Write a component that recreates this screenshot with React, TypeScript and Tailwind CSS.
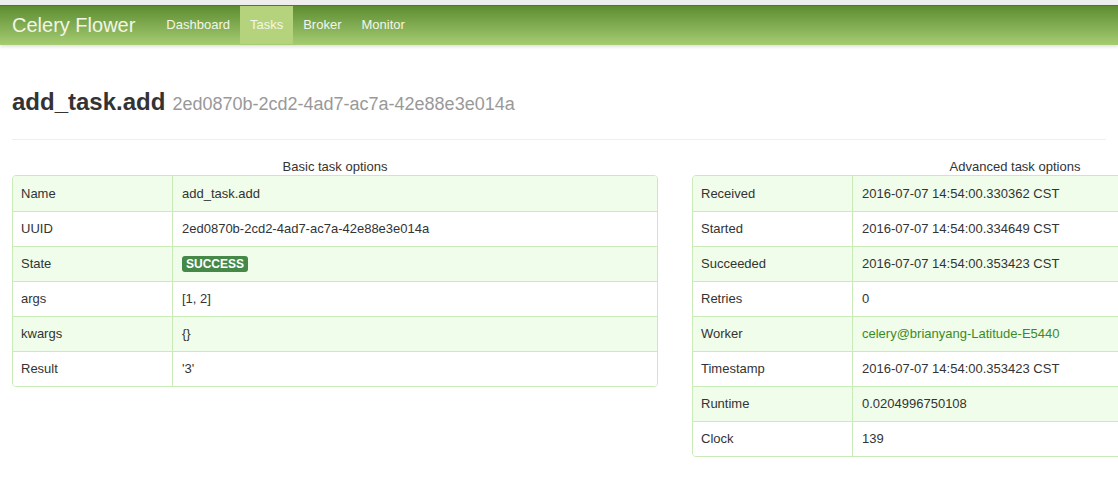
import React from 'react';

type Row = { label: string; value: React.ReactNode };

const basic: Row[] = [
  { label: 'Name', value: 'add_task.add' },
  { label: 'UUID', value: '2ed0870b-2cd2-4ad7-ac7a-42e88e3e014a' },
  {
    label: 'State',
    value: (
      <span className="inline-block rounded-[3px] bg-[#468847] px-[4px] py-[1px] text-[12px] font-bold leading-[14px] text-white">
        SUCCESS
      </span>
    ),
  },
  { label: 'args', value: '[1, 2]' },
  { label: 'kwargs', value: '{}' },
  { label: 'Result', value: "'3'" },
];

const advanced: Row[] = [
  { label: 'Received', value: '2016-07-07 14:54:00.330362 CST' },
  { label: 'Started', value: '2016-07-07 14:54:00.334649 CST' },
  { label: 'Succeeded', value: '2016-07-07 14:54:00.353423 CST' },
  { label: 'Retries', value: '0' },
  { label: 'Worker', value: <a className="text-[#3f8a1f]">celery@brianyang-Latitude-E5440</a> },
  { label: 'Timestamp', value: '2016-07-07 14:54:00.353423 CST' },
  { label: 'Runtime', value: '0.0204996750108' },
  { label: 'Clock', value: '139' },
];

const OptionsTable: React.FC<{ title: string; rows: Row[] }> = ({ title, rows }) => (
  <div className="w-[646px] shrink-0">
    <div className="h-[20px] pt-[3px] text-center leading-[17px]">{title}</div>
    <div className="overflow-hidden rounded-[4px] border border-[#c8ebb8]">
      {rows.map((r, i) => (
        <div
          key={r.label}
          className={`flex h-[35px] items-center ${i > 0 ? 'border-t border-[#c8ebb8]' : ''} ${
            i % 2 === 0 ? 'bg-[#effdea]' : 'bg-white'
          }`}
        >
          <div className="flex h-full w-[160px] items-center border-r border-[#c8ebb8] pl-[8px]">{r.label}</div>
          <div className="pl-[9px]">{r.value}</div>
        </div>
      ))}
    </div>
  </div>
);

const App: React.FC = () => {
  return (
    <div className="h-[485px] w-[1118px] overflow-hidden bg-white font-['Liberation_Sans',Arial,sans-serif] text-[13px] text-[#333]">
      <div className="h-[5px] bg-[#eeeeee]" />
      <div className="flex h-[40px] items-stretch border-t border-[#4f7a2a] bg-gradient-to-b from-[#5e8d30] to-[#a6cc72] shadow-[0_2px_3px_rgba(0,0,0,0.12)]">
        <div className="flex items-center pb-[1px] pl-[12px] pr-[21px] text-[20px] text-[#f2f5e8]">Celery Flower</div>
        <div className="flex items-stretch pb-[1px] text-[13px] text-[#f4f6ea]">
          <div className="flex items-center px-[10px]">Dashboard</div>
          <div className="flex items-center bg-[#b4d37c] px-[10px]">Tasks</div>
          <div className="flex items-center px-[10px]">Broker</div>
          <div className="flex items-center px-[10px]">Monitor</div>
        </div>
      </div>
      <div className="px-[12px]">
        <div className="mt-[42px] flex items-baseline gap-[7px] border-b border-[#eeeeee] pb-[21px]">
          <h1 className="text-[24px] font-bold leading-[30px] text-[#333]">add_task.add</h1>
          <span className="text-[18px] text-[#999]">2ed0870b-2cd2-4ad7-ac7a-42e88e3e014a</span>
        </div>
        <div className="mt-[15px] flex gap-[34px]">
          <OptionsTable title="Basic task options" rows={basic} />
          <OptionsTable title="Advanced task options" rows={advanced} />
        </div>
      </div>
    </div>
  );
};

export default App;
